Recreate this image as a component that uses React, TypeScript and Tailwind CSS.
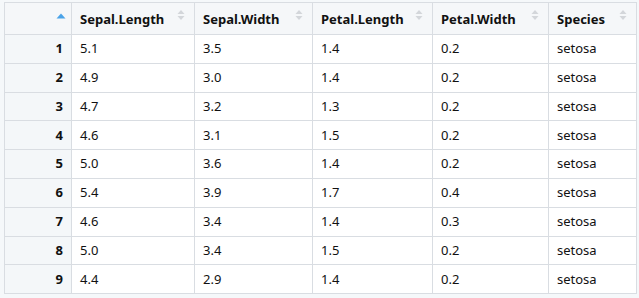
const columns = ['Sepal.Length', 'Sepal.Width', 'Petal.Length', 'Petal.Width', 'Species'];
const widths = ['w-[123px]', 'w-[118px]', 'w-[120px]', 'w-[116px]', 'w-[88px]'];

const rows = [
    ['5.1', '3.5', '1.4', '0.2', 'setosa'],
    ['4.9', '3.0', '1.4', '0.2', 'setosa'],
    ['4.7', '3.2', '1.3', '0.2', 'setosa'],
    ['4.6', '3.1', '1.5', '0.2', 'setosa'],
    ['5.0', '3.6', '1.4', '0.2', 'setosa'],
    ['5.4', '3.9', '1.7', '0.4', 'setosa'],
    ['4.6', '3.4', '1.4', '0.3', 'setosa'],
    ['5.0', '3.4', '1.5', '0.2', 'setosa'],
    ['4.4', '2.9', '1.4', '0.2', 'setosa'],
];

function SortIcon() {
    return (
        <svg width="8" height="12" viewBox="0 0 8 12" className="absolute right-[9px] top-[6px]">
            <path d="M4 1 L7.5 5 L0.5 5 Z" fill="#d3d6da" />
            <path d="M4 11 L7.5 7 L0.5 7 Z" fill="#d3d6da" />
        </svg>
    );
}

export default function App() {
    return (
        <div className="min-h-[298px] w-[639px] bg-[#f5f8fa] pt-[2px] pl-[4px]" style={{ fontFamily: '"Noto Sans", "Open Sans", sans-serif' }}>
            <table className="border-collapse table-fixed w-[633px] text-[13px] text-[#111]">
                <thead>
                    <tr className="h-[32px] bg-[#f5f7f9]">
                        <th className="relative w-[67px] border border-[#d9dde2]">
                            <svg width="10" height="6" viewBox="0 0 10 6" className="absolute right-[5px] top-[10px]">
                                <path d="M5 0.5 L9.5 5.5 L0.5 5.5 Z" fill="#4aa3e8" />
                            </svg>
                        </th>
                        {columns.map((c, i) => (
                            <th key={c} className={`relative ${widths[i]} border border-[#d9dde2] pl-[8px] pt-[2px] text-left font-bold`}>
                                {c}
                                <SortIcon />
                            </th>
                        ))}
                    </tr>
                </thead>
                <tbody>
                    {rows.map((r, idx) => (
                        <tr key={idx} className="h-[28.8px]">
                            <td className="border border-[#d9dde2] bg-[#f4f7f9] pr-[8px] text-right font-bold">{idx + 1}</td>
                            {r.map((v, j) => (
                                <td key={j} className="border border-[#d9dde2] bg-white pl-[8px]">{v}</td>
                            ))}
                        </tr>
                    ))}
                </tbody>
            </table>
        </div>
    );
}
